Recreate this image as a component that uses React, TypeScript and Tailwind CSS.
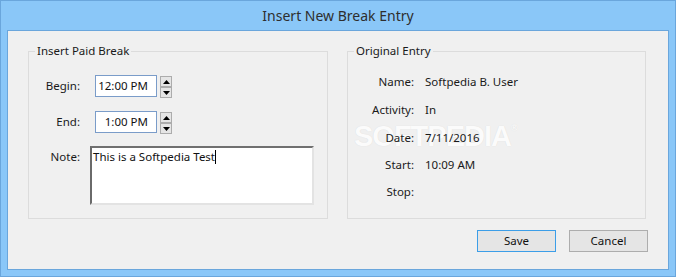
const font = "font-['Segoe_UI','Noto_Sans','Open_Sans',sans-serif]";

function TimeRow({ label, value, mt }: { label: string; value: string; mt: string }) {
  return (
    <div className={`flex items-start ${mt}`}>
      <div className="w-[51px] h-[22px] flex items-center justify-end text-[11.5px] text-[#1a1a1a]">{label}</div>
      <div className="ml-[15px] w-[62px] h-[22px] border border-[#7a9cc9] bg-white flex items-center justify-end pr-[8px] text-[11.5px] text-[#111]">
        {value}
      </div>
      <div className="ml-[3px] mt-[1px] flex flex-col">
        <div className="w-[12px] h-[11px] border border-[#acacac] bg-[#e5e5e5] flex items-center justify-center">
          <svg width="7" height="4" viewBox="0 0 7 4"><path d="M3.5 0L7 4H0z" fill="#000" /></svg>
        </div>
        <div className="w-[12px] h-[11px] border border-[#acacac] bg-[#e5e5e5] flex items-center justify-center">
          <svg width="7" height="4" viewBox="0 0 7 4"><path d="M0 0h7L3.5 4z" fill="#000" /></svg>
        </div>
      </div>
    </div>
  );
}

export default function App() {
  const info = [
    { k: "Name:", v: "Softpedia B. User" },
    { k: "Activity:", v: "In" },
    { k: "Date:", v: "7/11/2016" },
    { k: "Start:", v: "10:09 AM" },
    { k: "Stop:", v: "" },
  ];
  return (
    <div className={`w-[676px] h-[277px] bg-[#8ac7f8] border border-[#6aa6dc] flex flex-col ${font}`}>
      <div className="h-[29px] flex items-center justify-center text-[14px] text-[#2e2e2e]">Insert New Break Entry</div>
      <div className="mx-[6px] mb-[6px] flex-1 border border-[#6aa6dc] bg-[#f0f0f0] flex flex-col">
        <div className="flex pl-[20px] pt-[12px] gap-[19px]">
          <fieldset className="w-[300px] h-[176px] border border-[#dcdcdc]">
            <legend className="ml-[6px] px-[2px] h-[16px] leading-[16px] text-[11.5px] text-[#1a1a1a]">Insert Paid Break</legend>
            <TimeRow label="Begin:" value="12:00 PM" mt="mt-[16px]" />
            <TimeRow label="End:" value="1:00 PM" mt="mt-[13px]" />
            <div className="flex items-start mt-[12px]">
              <div className="w-[51px] pt-[2px] text-right text-[11.5px] text-[#1a1a1a]">Note:</div>
              <div className="ml-[10px] w-[224px] h-[59px] bg-white border-2 border-t-[#707070] border-l-[#6a6a6a] border-b-[#e3e3e3] border-r-[#e3e3e3] px-[1px] text-[11.5px] text-[#111] leading-[18px]">
                This is a Softpedia Test<span className="inline-block w-px h-[14px] bg-black align-[-3px]" />
              </div>
            </div>
          </fieldset>
          <fieldset className="relative w-[299px] h-[176px] border border-[#dcdcdc]">
            <legend className="ml-[6px] px-[2px] h-[16px] leading-[16px] text-[11.5px] text-[#1a1a1a]">Original Entry</legend>
            <span className="absolute left-[6px] top-[56px] text-[29px] font-bold tracking-[-1px] text-white/90 [text-shadow:0_0_1px_rgba(0,0,0,0.12)] font-['Liberation_Sans',sans-serif] pointer-events-none">
              SOFTPEDIA<sup className="text-[9px] align-super">®</sup>
            </span>
            <div className="relative mt-[9px] flex flex-col">
              {info.map((r, i) => (
                <div key={r.k} className={`flex items-center text-[11.5px] text-[#1a1a1a] ${i === 1 ? "h-[29px]" : "h-[27px]"}`}>
                  <div className="w-[66px] text-right">{r.k}</div>
                  <div className="ml-[11px]">{r.v}</div>
                </div>
              ))}
            </div>
          </fieldset>
        </div>
        <div className="flex justify-end gap-[13px] pr-[20px] mt-[11px]">
          <button className="w-[79px] h-[22px] border border-[#3c9ee8] bg-[#e5e5e5] text-[11.5px] text-[#111]">Save</button>
          <button className="w-[79px] h-[22px] border border-[#adadad] bg-[#e5e5e5] text-[11.5px] text-[#111]">Cancel</button>
        </div>
      </div>
    </div>
  );
}
